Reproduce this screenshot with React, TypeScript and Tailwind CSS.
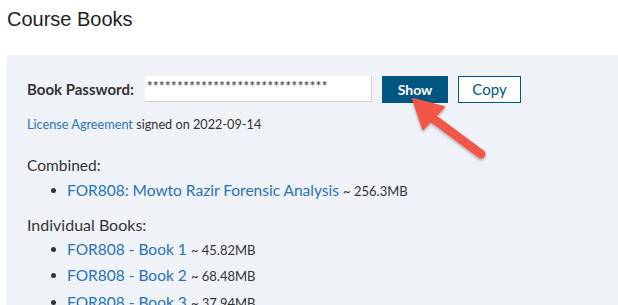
import React from "react";

function Item({ title, size, link = 15.5 }: { title: string; size: string; link?: number }) {
  return (
    <div className="flex items-center h-[20px] pl-[24px]">
      <span className="w-[5px] h-[5px] rounded-full bg-[#333] mr-[11px]" />
      <span className="whitespace-nowrap leading-[20px]">
        <a className="text-[#2a72b5]" style={{ fontSize: link }}>{title}</a>{" "}
        <span className="text-[13px] text-[#333]">~ {size}</span>
      </span>
    </div>
  );
}

export default function App() {
  const lato = { fontFamily: "Lato, 'Open Sans', sans-serif" };
  return (
    <div className="relative w-[618px] h-[305px] overflow-hidden bg-white text-[#333]" style={lato}>
      <h2 className="pl-[7px] pt-[7px] text-[20px] leading-[24px] text-[#222] font-normal" style={{ fontFamily: "'Liberation Sans', Arial, sans-serif" }}>
        Course Books
      </h2>
      <div className="ml-[7px] mt-[24px] w-[620px] bg-[#eff3f7] pl-[20px] pt-[21px] pb-[20px]">
        <div className="flex items-center h-[27px]">
          <span className="text-[15px] font-bold text-[#333] w-[118px]">Book Password:</span>
          <div className="w-[227px] h-[26px] self-start bg-white border-b border-r border-[#d0d0d0] pl-[2px] flex items-center text-[13px] font-bold tracking-[0.5px] text-[#555] leading-none pb-[5px]">
            ******************************
          </div>
          <button className="ml-[10px] w-[66px] h-[27px] bg-[#00567e] text-white text-[14px] font-bold">Show</button>
          <button className="ml-[10px] w-[63px] h-[27px] bg-white border-[1.5px] border-[#00567e] text-[#00567e] text-[15px]">Copy</button>
        </div>
        <div className="mt-[13px] text-[12.7px] leading-[16px]">
          <a className="text-[#2a72b5]">License Agreement</a> signed on 2022-09-14
        </div>
        <div className="mt-[24px] text-[15.5px] leading-[18px]">Combined:</div>
        <div className="mt-[6px]">
          <Item title="FOR808: Mowto Razir Forensic Analysis" size="256.3MB" />
        </div>
        <div className="mt-[16px] text-[16px] leading-[18px]">Individual Books:</div>
        <div className="mt-[5px] flex flex-col gap-[6.5px]">
          <Item title="FOR808 - Book 1" size="45.82MB" />
          <Item title="FOR808 - Book 2" size="68.48MB" />
          <Item title="FOR808 - Book 3" size="37.94MB" />
        </div>
      </div>
      <svg className="absolute left-0 top-0" width="618" height="305" viewBox="0 0 618 305">
        <defs>
          <filter id="sh" x="-20%" y="-20%" width="140%" height="140%">
            <feDropShadow dx="0" dy="1.5" stdDeviation="1.5" floodColor="#000" floodOpacity="0.35" />
          </filter>
        </defs>
        <g filter="url(#sh)" fill="#f2564a" stroke="#f2564a">
          <line x1="423" y1="111" x2="481" y2="154" strokeWidth="9" strokeLinecap="round" />
          <polygon points="413,99 444,107 423,129" strokeWidth="2" strokeLinejoin="round" />
        </g>
      </svg>
    </div>
  );
}
